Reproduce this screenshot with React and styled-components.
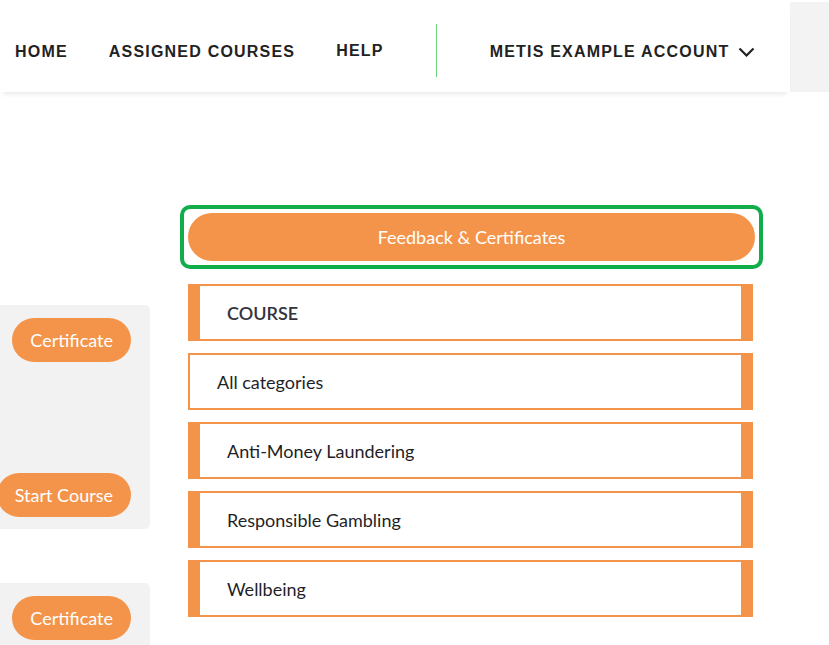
import React from 'react';
import styled, { createGlobalStyle } from 'styled-components';

const GlobalStyle = createGlobalStyle`
  html, body {
    margin: 0;
    padding: 0;
    background: #fff;
    overflow: hidden;
  }
  body {
    font-family: Lato, "Noto Sans", sans-serif;
  }
`;

const orange = '#f4944a';

const Page = styled.div`
  width: 829px;
  height: 645px;
  overflow: hidden;
`;

const Top = styled.div`
  display: flex;
  align-items: flex-start;
  width: 829px;
`;

const NavBar = styled.nav`
  width: 790px;
  flex-shrink: 0;
  height: 92px;
  background: #fff;
  box-shadow: 0 5px 5px -3px rgba(0, 0, 0, 0.09);
  display: flex;
  align-items: center;
  padding: 12px 0 0 15px;
  box-sizing: border-box;
  position: relative;
  z-index: 1;
`;

const Filler = styled.div`
  flex: 1;
  height: 90px;
  margin-top: 2px;
  background: #f3f3f3;
`;

const NavLink = styled.a`
  flex-shrink: 0;
  white-space: nowrap;
  font-family: "Liberation Sans", Arial, sans-serif;
  font-weight: 700;
  font-size: 16px;
  letter-spacing: 1.2px;
  color: #222;
  text-decoration: none;
  margin-right: ${(p) => p.gap || 41}px;
  margin-top: ${(p) => (p.up ? -3 : 0)}px;
  display: flex;
  align-items: center;
  gap: 9px;
`;

const Divider = styled.div`
  flex-shrink: 0;
  width: 1px;
  height: 53px;
  margin-top: -3px;
  background: #6fd47f;
  margin-right: 53px;
`;

const Main = styled.main`
  display: flex;
  align-items: flex-start;
  gap: 30px;
  padding-top: 113px;
`;

const LeftCol = styled.div`
  flex: 0 0 170px;
  margin-left: -20px;
  margin-top: 100px;
  display: flex;
  flex-direction: column;
  gap: 54px;
`;

const Panel = styled.div`
  height: 224px;
  background: #f2f2f2;
  border-radius: 0 5px 5px 0;
  display: flex;
  flex-direction: column;
  justify-content: space-between;
  align-items: flex-end;
  padding: 13px 19px 12px 0;
  box-sizing: border-box;
`;

const PillButton = styled.button`
  height: 44px;
  padding: 0 18px;
  border: none;
  border-radius: 22px;
  background: ${orange};
  color: #fff;
  font-family: Lato, sans-serif;
  font-size: 18px;
  white-space: nowrap;
  cursor: pointer;
`;

const RightCol = styled.div`
  flex: 0 0 583px;
  display: flex;
  flex-direction: column;
  gap: 15px;
`;

const Highlight = styled.div`
  border: 4px solid #12ad4b;
  border-radius: 10px;
  padding: 4px;
  height: 64px;
  box-sizing: border-box;
  display: flex;
`;

const WideButton = styled(PillButton)`
  flex: 1;
  height: 48px;
  border-radius: 24px;
`;

const List = styled.div`
  display: flex;
  flex-direction: column;
  gap: 12px;
  margin-left: 8px;
  width: 565px;
`;

const Row = styled.div`
  height: 57px;
  box-sizing: border-box;
  border: 2px solid ${orange};
  border-left-width: ${(p) => (p.thin ? 2 : 12)}px;
  border-right-width: 12px;
  display: flex;
  align-items: center;
  padding-left: 27px;
  font-family: Lato, sans-serif;
  font-size: 18px;
  font-weight: ${(p) => (p.head ? 600 : 400)};
  color: ${(p) => (p.head ? '#33333d' : '#1f1f28')};
`;

const Chevron = () => (
  <svg width="17" height="10" viewBox="0 0 17 10" fill="none">
    <polyline points="1.5,1.5 8.5,8.5 15.5,1.5" stroke="#222" strokeWidth="2.2" />
  </svg>
);

export default function App() {
  return (
    <Page>
      <GlobalStyle />
      <Top>
        <NavBar>
          <NavLink href="#">HOME</NavLink>
          <NavLink href="#">ASSIGNED COURSES</NavLink>
          <NavLink href="#" up gap={52}>HELP</NavLink>
          <Divider />
          <NavLink href="#">
            METIS EXAMPLE ACCOUNT
            <Chevron />
          </NavLink>
        </NavBar>
        <Filler />
      </Top>
      <Main>
        <LeftCol>
          <Panel>
            <PillButton>Certificate</PillButton>
            <PillButton>Start Course</PillButton>
          </Panel>
          <Panel>
            <PillButton>Certificate</PillButton>
          </Panel>
        </LeftCol>
        <RightCol>
          <Highlight>
            <WideButton>Feedback &amp; Certificates</WideButton>
          </Highlight>
          <List>
            <Row head>COURSE</Row>
            <Row thin>All categories</Row>
            <Row>Anti-Money Laundering</Row>
            <Row>Responsible Gambling</Row>
            <Row>Wellbeing</Row>
          </List>
        </RightCol>
      </Main>
    </Page>
  );
}
